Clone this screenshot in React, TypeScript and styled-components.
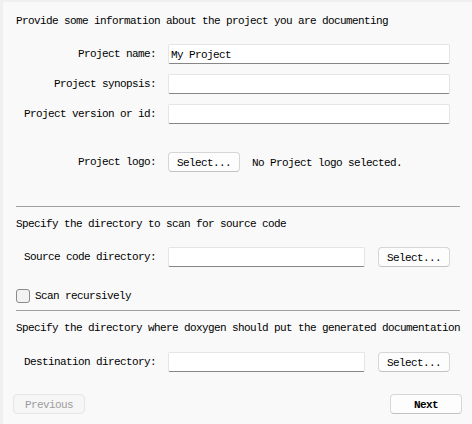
import styled, { createGlobalStyle } from "styled-components";

const GlobalStyle = createGlobalStyle`
  html, body {
    margin: 0;
    padding: 0;
    background: #f0f0f0;
  }
  body {
    font-family: "Liberation Mono", "DejaVu Sans Mono", monospace;
    font-size: 11px;
    letter-spacing: -0.6px;
    color: #000;
  }
`;

const Window = styled.div`
  width: 469px;
  height: 422px;
  margin: 2px 0 0 3px;
  background: #f9f9f9;
  display: flex;
  flex-direction: column;
  box-sizing: border-box;
  padding: 8px 10px 0 10px;
`;

const Title = styled.div<{ $top?: number }>`
  box-sizing: border-box;
  height: 20px;
  line-height: 18px;
  padding: 2px 0 0 3px;
  margin-top: ${(p) => p.$top ?? 0}px;
  white-space: nowrap;
`;

const Form = styled.div<{ $top: number; $gap?: number }>`
  display: grid;
  grid-template-columns: 132px 1fr;
  column-gap: 12px;
  row-gap: ${(p) => p.$gap ?? 10}px;
  margin-top: ${(p) => p.$top}px;
  padding-left: 11px;
  width: 426px;
`;

const Label = styled.label`
  text-align: right;
  line-height: 21px;
  height: 20px;
  white-space: nowrap;
`;

const Field = styled.div`
  display: flex;
  align-items: center;
  gap: 13px;
  height: 20px;
`;

const Input = styled.input<{ $width?: number }>`
  box-sizing: border-box;
  height: 20px;
  width: ${(p) => (p.$width ? `${p.$width}px` : "100%")};
  border: 1px solid #e5e5e5;
  border-bottom-color: #868686;
  border-radius: 2px;
  background: #fff;
  font: inherit;
  letter-spacing: inherit;
  padding: 1px 2px 0;
  outline: none;
`;

const Button = styled.button<{ $primary?: boolean }>`
  box-sizing: border-box;
  height: 20px;
  width: 72px;
  border: 1px solid #d6d6d6;
  border-bottom-color: #c2c2c2;
  border-radius: 4px;
  background: #fdfdfd;
  font: inherit;
  letter-spacing: inherit;
  font-weight: ${(p) => (p.$primary ? 700 : 400)};
  color: #000;
  padding: 1px 0 0;

  &:disabled {
    background: #f6f6f6;
    border-color: #e6e6e6;
    color: #9c9c9c;
  }
`;

const Note = styled.span`
  margin-left: -1px;
  padding-top: 1px;
  white-space: nowrap;
`;

const Separator = styled.hr<{ $top: number }>`
  border: none;
  border-top: 1px solid #a0a0a0;
  margin: ${(p) => p.$top}px 0 0 3px;
  width: 444px;
`;

const CheckRow = styled.label`
  display: flex;
  align-items: center;
  gap: 5px;
  margin-top: 21px;
  height: 16px;
  padding-left: 3px;
`;

const Box = styled.span`
  box-sizing: border-box;
  width: 14px;
  height: 14px;
  border: 1px solid #8a8a8a;
  border-radius: 3px;
  background: #f2f2f2;
`;

const Footer = styled.div`
  display: flex;
  justify-content: space-between;
  margin-top: 22px;
  width: 449px;
`;

function App() {
  return (
    <>
      <GlobalStyle />
      <Window>
        <Title>Provide some information about the project you are documenting</Title>
        <Form $top={14}>
          <Label>Project name:</Label>
          <Field>
            <Input defaultValue="My Project" />
          </Field>
          <Label>Project synopsis:</Label>
          <Field>
            <Input />
          </Field>
          <Label>Project version or id:</Label>
          <Field>
            <Input />
          </Field>
        </Form>
        <Form $top={28}>
          <Label>Project logo:</Label>
          <Field>
            <Button>Select...</Button>
            <Note>No Project logo selected.</Note>
          </Field>
        </Form>

        <Separator $top={34} />
        <Title $top={6}>Specify the directory to scan for source code</Title>
        <Form $top={14}>
          <Label>Source code directory:</Label>
          <Field>
            <Input $width={197} />
            <Button>Select...</Button>
          </Field>
        </Form>
        <CheckRow>
          <Box />
          Scan recursively
        </CheckRow>

        <Separator $top={6} />
        <Title $top={6}>Specify the directory where doxygen should put the generated documentation</Title>
        <Form $top={15}>
          <Label>Destination directory:</Label>
          <Field>
            <Input $width={197} />
            <Button>Select...</Button>
          </Field>
        </Form>

        <Footer>
          <Button disabled>Previous</Button>
          <Button $primary>Next</Button>
        </Footer>
      </Window>
    </>
  );
}

export default App;
